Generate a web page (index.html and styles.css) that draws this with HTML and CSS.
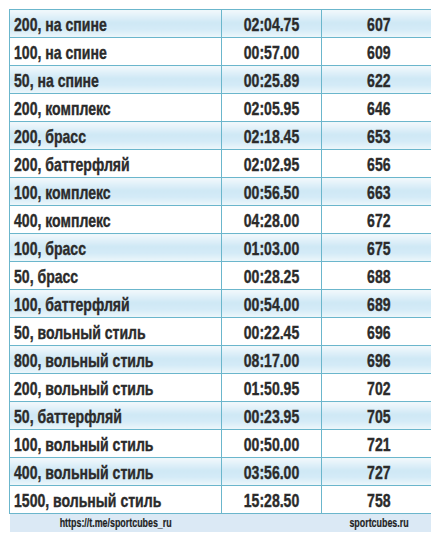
FILE: index.html
```html
<!DOCTYPE html>
<html lang="ru">
<head>
    <meta charset="UTF-8">
    <meta name="viewport" content="width=device-width, initial-scale=1.0">
    <title>Очки FINA</title>
    <link rel="stylesheet" href="styles.css">
</head>
<body>
    <table class="results">
        <colgroup>
            <col class="col-event">
            <col class="col-time">
            <col class="col-points">
        </colgroup>
        <tbody>
            <tr class="shade"><td><span>200, на спине</span></td><td><span>02:04.75</span></td><td><span>607</span></td></tr>
            <tr><td><span>100, на спине</span></td><td><span>00:57.00</span></td><td><span>609</span></td></tr>
            <tr class="shade"><td><span>50, на спине</span></td><td><span>00:25.89</span></td><td><span>622</span></td></tr>
            <tr><td><span>200, комплекс</span></td><td><span>02:05.95</span></td><td><span>646</span></td></tr>
            <tr class="shade"><td><span>200, брасс</span></td><td><span>02:18.45</span></td><td><span>653</span></td></tr>
            <tr><td><span>200, баттерфляй</span></td><td><span>02:02.95</span></td><td><span>656</span></td></tr>
            <tr class="shade"><td><span>100, комплекс</span></td><td><span>00:56.50</span></td><td><span>663</span></td></tr>
            <tr><td><span>400, комплекс</span></td><td><span>04:28.00</span></td><td><span>672</span></td></tr>
            <tr class="shade"><td><span>100, брасс</span></td><td><span>01:03.00</span></td><td><span>675</span></td></tr>
            <tr><td><span>50, брасс</span></td><td><span>00:28.25</span></td><td><span>688</span></td></tr>
            <tr class="shade"><td><span>100, баттерфляй</span></td><td><span>00:54.00</span></td><td><span>689</span></td></tr>
            <tr><td><span>50, вольный стиль</span></td><td><span>00:22.45</span></td><td><span>696</span></td></tr>
            <tr class="shade"><td><span>800, вольный стиль</span></td><td><span>08:17.00</span></td><td><span>696</span></td></tr>
            <tr><td><span>200, вольный стиль</span></td><td><span>01:50.95</span></td><td><span>702</span></td></tr>
            <tr class="shade"><td><span>50, баттерфляй</span></td><td><span>00:23.95</span></td><td><span>705</span></td></tr>
            <tr><td><span>100, вольный стиль</span></td><td><span>00:50.00</span></td><td><span>721</span></td></tr>
            <tr class="shade"><td><span>400, вольный стиль</span></td><td><span>03:56.00</span></td><td><span>727</span></td></tr>
            <tr><td><span>1500, вольный стиль</span></td><td><span>15:28.50</span></td><td><span>758</span></td></tr>
        </tbody>
        <tfoot>
            <tr class="footer"><td><span>https://t.me/sportcubes_ru</span></td><td></td><td><span>sportcubes.ru</span></td></tr>
        </tfoot>
    </table>
</body>
</html>
```

FILE: styles.css
```css
/* Page */
body {
    margin: 9px;
    background-color: #fff;
    font-family: "Liberation Sans", Arial, sans-serif;
    font-weight: bold;
    color: #2b2b2b;
}
/* Table */
.results {
    border-collapse: collapse;
    table-layout: fixed;
    width: 427px;
}
.col-event { width: 212px; }
.col-time { width: 100px; }
.col-points { width: 115px; }
.results td {
    border: 1px solid #6bb6cc;
    height: 25px;
    padding: 2px 0 0;
    font-size: 19px;
    line-height: 25px;
    text-align: center;
    white-space: nowrap;
    overflow: hidden;
    -webkit-text-stroke: 0.4px #2b2b2b;
}
/* Condensed look: the face is squeezed sideways */
.results td span {
    display: inline-block;
    transform: scaleX(0.74);
}
.results td:first-child {
    text-align: left;
    padding-left: 4px;
}
.results td:first-child span {
    transform-origin: left center;
}
.shade td {
    background: linear-gradient(to bottom, #f1f8fc 0%, #cfe8f5 45%, #d4ebf7 70%, #eef7fb 100%);
}
/* Footer strip */
.footer td {
    border: none;
    height: 18px;
    padding: 0;
    line-height: 18px;
    font-size: 12px;
    background-color: #dbe9f5;
    color: #1e1e1e;
    -webkit-text-stroke: 0.2px #1e1e1e;
}
.footer td:first-child {
    text-align: center;
    padding-left: 0;
}
.footer td:first-child span {
    transform-origin: center;
}
```
